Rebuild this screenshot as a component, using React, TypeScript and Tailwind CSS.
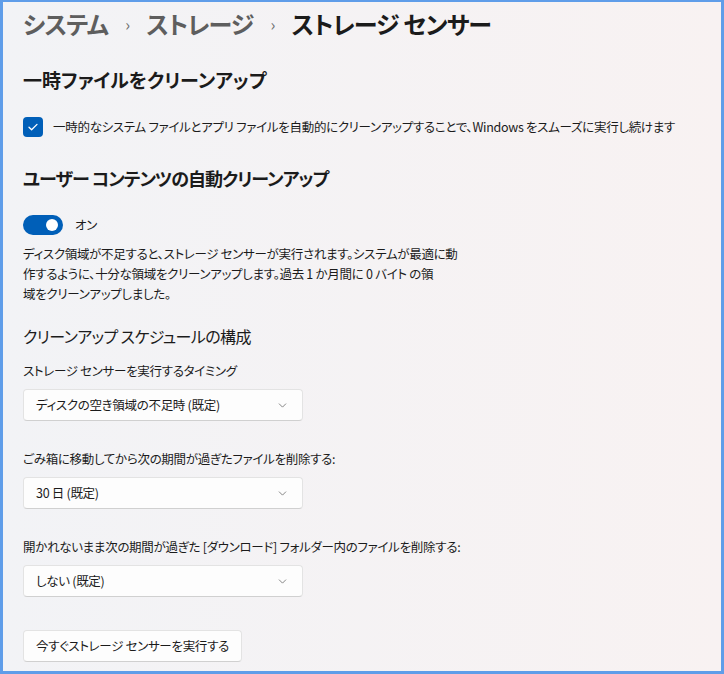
import { ChevronDown } from 'lucide-react';

const jp = "font-['Noto_Sans_CJK_JP','Noto_Sans',sans-serif] [font-feature-settings:'palt']";
const body = 'text-[12.5px] leading-5 tracking-[-0.3px]';

function Dropdown({ label, value, className = '' }: { label: string; value: string; className?: string }) {
  return (
    <div className={`flex flex-col ${className}`}>
      <div className={`${body} text-[#1b1b1b]`}>{label}</div>
      <div className="mt-[8px] flex h-[32px] w-[280px] items-center justify-between rounded-[4px] border border-[#e3e3e3] border-b-[#d0d0d0] bg-[#fdfdfd] pl-3 pr-[13px]">
        <span className={`${body} text-[#1b1b1b]`}>{value}</span>
        <ChevronDown size={13} strokeWidth={1.5} className="text-[#6b6b6b]" />
      </div>
    </div>
  );
}

export default function App() {
  return (
    <div className={`${jp} h-[674px] w-[724px] overflow-hidden border-[3px] border-t-2 border-[#5f9de9] bg-gradient-to-r from-[#f2f3f6] to-[#f8f2f2] text-[#1b1b1b]`}>
      <div className="px-[20px]">
        {/* breadcrumb */}
        <div className="flex h-[44px] items-center gap-[17px] text-[24px] font-semibold leading-none tracking-[-0.8px]">
          <span className="text-[#5e5e5e]">システム</span>
          <span className="text-[16px] font-normal text-[#6e6e6e]">›</span>
          <span className="text-[#5e5e5e]">ストレージ</span>
          <span className="text-[16px] font-normal text-[#6e6e6e]">›</span>
          <span className="text-[#1b1b1b]">ストレージ センサー</span>
        </div>

        <h2 className="mt-[20px] text-[19px] font-bold leading-7">一時ファイルをクリーンアップ</h2>

        <label className="mt-[23px] flex items-center gap-[10px]">
          <span className="flex h-[20px] w-[20px] shrink-0 items-center justify-center rounded-[4px] bg-[#005fb8]">
            <svg width="12" height="12" viewBox="0 0 12 12" fill="none">
              <path d="M2 6.3 4.6 8.8 10 3.4" stroke="white" strokeWidth="1.3" strokeLinecap="round" strokeLinejoin="round" />
            </svg>
          </span>
          <span className={`${body} whitespace-nowrap`}>一時的なシステム ファイルとアプリ ファイルを自動的にクリーンアップすることで、Windows をスムーズに実行し続けます</span>
        </label>

        <h2 className="mt-[27px] text-[18px] font-bold leading-7 tracking-[-1px]">ユーザー コンテンツの自動クリーンアップ</h2>

        <div className="mt-[23px] flex h-[20px] items-center gap-[12px]">
          <span className="flex h-[20px] w-[40px] items-center justify-end rounded-full bg-[#005fb8] pr-[5px]">
            <span className="h-[12px] w-[12px] rounded-full bg-white" />
          </span>
          <span className={body}>オン</span>
        </div>

        <p className={`mt-[9px] ${body}`}>
          ディスク領域が不足すると、ストレージ センサーが実行されます。システムが最適に動
          <br />
          作するように、十分な領域をクリーンアップします。過去 1 か月間に 0 バイト の領
          <br />
          域をクリーンアップしました。
        </p>

        <h3 className="mt-[18px] text-[16px] leading-7 tracking-[-0.6px]">クリーンアップ スケジュールの構成</h3>

        <Dropdown className="mt-[11px]" label="ストレージ センサーを実行するタイミング" value="ディスクの空き領域の不足時 (既定)" />
        <Dropdown className="mt-[28px]" label="ごみ箱に移動してから次の期間が過ぎたファイルを削除する:" value="30 日 (既定)" />
        <Dropdown className="mt-[28px]" label="開かれないまま次の期間が過ぎた [ダウンロード] フォルダー内のファイルを削除する:" value="しない (既定)" />

        <button className={`mt-[33px] flex h-[32px] items-center rounded-[4px] border border-[#e3e3e3] border-b-[#d0d0d0] bg-[#fdfdfd] px-[12px] ${body} text-[#1b1b1b]`}>
          今すぐストレージ センサーを実行する
        </button>
      </div>
    </div>
  );
}
